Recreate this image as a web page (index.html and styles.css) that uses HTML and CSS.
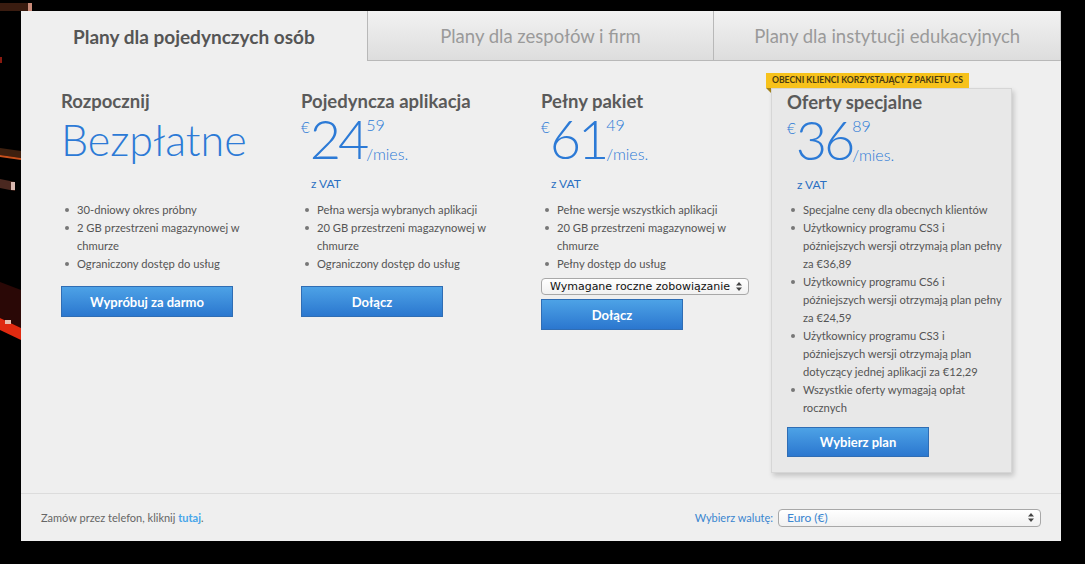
FILE: index.html
```html
<!DOCTYPE html>
<html lang="pl">
<head>
    <meta charset="UTF-8">
    <title>Plany Creative Cloud</title>
    <link rel="stylesheet" href="styles.css">
</head>
<body>
    <div class="backdrop">
        <svg width="40" height="564" viewBox="0 0 40 564">
            <rect x="0" y="3" width="28" height="8" fill="#3a1c10"/>
            <rect x="28" y="3" width="4" height="8" fill="#c88a78"/>
            <rect x="0" y="57" width="2" height="6" fill="#8a1a10"/>
            <polygon points="0,148 21,151 21,158 0,155" fill="#3e200f"/>
            <polygon points="0,155 21,158 21,160 0,157" fill="#c8501c"/>
            <polygon points="0,179 15,182 15,191 0,188" fill="#4a2820"/>
            <rect x="11" y="182" width="4" height="8" fill="#d8b8b0"/>
            <polygon points="0,282 21,290 21,328 0,318" fill="#2a0806"/>
            <polygon points="0,318 21,328 21,340 0,330" fill="#e02a10"/>
            <rect x="5" y="320" width="6" height="4" fill="#e8c0b0"/>
        </svg>
    </div>

    <div class="panel">
        <div class="tabs">
            <div class="tab active">Plany dla pojedynczych osób</div>
            <div class="tab">Plany dla zespołów i firm</div>
            <div class="tab last">Plany dla instytucji edukacyjnych</div>
        </div>

        <div class="plans">
            <div class="plan">
                <h2>Rozpocznij</h2>
                <div class="price-area free-area">
                    <div class="free">Bezpłatne</div>
                </div>
                <ul>
                    <li>30-dniowy okres próbny</li>
                    <li>2 GB przestrzeni magazynowej w chmurze</li>
                    <li>Ograniczony dostęp do usług</li>
                </ul>
                <a class="btn btn-wide" href="#">Wypróbuj za darmo</a>
            </div>

            <div class="plan">
                <h2>Pojedyncza aplikacja</h2>
                <div class="price-area">
                    <div class="price">
                        <span class="cur">€</span>
                        <span class="int">24</span>
                        <span class="side"><span class="cents">59</span><span class="per">/mies.</span></span>
                    </div>
                    <div class="vat">z VAT</div>
                </div>
                <ul>
                    <li>Pełna wersja wybranych aplikacji</li>
                    <li>20 GB przestrzeni magazynowej w chmurze</li>
                    <li>Ograniczony dostęp do usług</li>
                </ul>
                <a class="btn" href="#">Dołącz</a>
            </div>

            <div class="plan">
                <h2>Pełny pakiet</h2>
                <div class="price-area">
                    <div class="price">
                        <span class="cur">€</span>
                        <span class="int">61</span>
                        <span class="side"><span class="cents">49</span><span class="per">/mies.</span></span>
                    </div>
                    <div class="vat">z VAT</div>
                </div>
                <ul>
                    <li>Pełne wersje wszystkich aplikacji</li>
                    <li>20 GB przestrzeni magazynowej w chmurze</li>
                    <li>Pełny dostęp do usług</li>
                </ul>
                <div class="select commit">
                    <span>Wymagane roczne zobowiązanie</span>
                    <svg class="arrows" width="6" height="9" viewBox="0 0 6 9"><path d="M3 0 L6 3.5 H0 Z M0 5.5 H6 L3 9 Z" fill="#444"/></svg>
                </div>
                <a class="btn btn-tight" href="#">Dołącz</a>
            </div>

            <div class="plan special">
                <div class="badge">OBECNI KLIENCI KORZYSTAJĄCY Z PAKIETU CS</div>
                <div class="card">
                    <h2>Oferty specjalne</h2>
                    <div class="price-area">
                        <div class="price">
                            <span class="cur">€</span>
                            <span class="int">36</span>
                            <span class="side"><span class="cents">89</span><span class="per">/mies.</span></span>
                        </div>
                        <div class="vat">z VAT</div>
                    </div>
                    <ul>
                        <li>Specjalne ceny dla obecnych klientów</li>
                        <li>Użytkownicy programu CS3 i późniejszych wersji otrzymają plan pełny za €36,89</li>
                        <li>Użytkownicy programu CS6 i późniejszych wersji otrzymają plan pełny za €24,59</li>
                        <li>Użytkownicy programu CS3 i późniejszych wersji otrzymają plan dotyczący jednej aplikacji za €12,29</li>
                        <li>Wszystkie oferty wymagają opłat rocznych</li>
                    </ul>
                    <a class="btn btn-card" href="#">Wybierz plan</a>
                </div>
            </div>
        </div>

        <div class="footer">
            <p>Zamów przez telefon, kliknij <a href="#">tutaj</a>.</p>
            <div class="currency">
                <label>Wybierz walutę:</label>
                <div class="select money">
                    <span>Euro (€)</span>
                    <svg class="arrows" width="6" height="9" viewBox="0 0 6 9"><path d="M3 0 L6 3.5 H0 Z M0 5.5 H6 L3 9 Z" fill="#444"/></svg>
                </div>
            </div>
        </div>
    </div>
</body>
</html>
```

FILE: styles.css
```css
* { box-sizing: border-box; margin: 0; padding: 0; }
body {
    background: #000;
    font-family: Lato, "Open Sans", sans-serif;
    color: #555;
    position: relative;
    height: 564px;
    overflow: hidden;
}
.backdrop { position: absolute; left: 0; top: 0; }
.backdrop svg { display: block; }

.panel {
    position: relative;
    margin: 11px 0 0 21px;
    width: 1040px;
    height: 530px;
    background: #efefef;
    display: flex;
    flex-direction: column;
}

/* tabs */
.tabs { display: flex; height: 50px; }
.tab {
    flex: 1;
    display: flex;
    align-items: center;
    justify-content: center;
    font-size: 18.5px;
    color: #9a9a9a;
    background: linear-gradient(#f2f2f2, #dddddd);
    border-left: 1px solid #b8b8b8;
    border-bottom: 1px solid #b8b8b8;
}
.tab.active {
    background: #efefef;
    border: none;
    color: #555;
    font-size: 19px;
    font-weight: 700;
}
.tab.last { border-right: 1px solid #c8c8c8; }

/* plans */
.plans {
    height: 432px;
    display: grid;
    grid-template-columns: 240px 240px 225px 250px;
    padding-left: 40px;
}
.plan { padding-top: 29px; }
.plan h2 {
    font-size: 18.5px;
    line-height: 22px;
    font-weight: 700;
    color: #5a5a5a;
}
.price-area { height: 89px; }
.free-area { padding-top: 6px; }
.free {
    font-size: 43px;
    font-weight: 300;
    line-height: 43px;
    color: #2c7ad6;
}
.price {
    display: flex;
    align-items: flex-start;
    color: #2c7ad6;
    font-weight: 300;
}
.cur { font-size: 15px; line-height: 15px; margin-top: 8px; }
.int { font-size: 54px; line-height: 54px; letter-spacing: -3px; }
.side { display: flex; flex-direction: column; margin-left: 0; }
.cents { font-size: 16px; line-height: 16px; margin-top: 5px; }
.per { font-size: 16px; line-height: 16px; margin-top: 13px; }
.vat {
    font-size: 12px;
    color: #2a6fc2;
    margin: 10px 0 0 10px;
}

ul { list-style: none; width: 200px; }
li {
    font-size: 11.2px;
    line-height: 18px;
    position: relative;
    padding-left: 16px;
    color: #555;
}
li::before {
    content: "";
    position: absolute;
    left: 4px;
    top: 7px;
    width: 4px;
    height: 4px;
    border-radius: 50%;
    background: #777;
}

.btn {
    display: flex;
    align-items: center;
    justify-content: center;
    width: 142px;
    height: 31px;
    margin-top: 13px;
    background: linear-gradient(#4da2e6, #2b77cf);
    border: 1px solid #2f6db4;
    color: #fff;
    font-size: 13px;
    font-weight: 700;
    text-decoration: none;
}
.btn-wide { width: 172px; }
.btn-tight { margin-top: 4px; }
.btn-card { margin-top: 10px; height: 30px; }

.select {
    display: flex;
    align-items: center;
    justify-content: space-between;
    background: linear-gradient(#ffffff, #f1f1f1);
    border: 1px solid #a8a8a8;
    border-radius: 4px;
    padding: 0 6px 0 8px;
}
.commit {
    width: 208px;
    height: 17px;
    margin-top: 5px;
    font-family: "DejaVu Sans", sans-serif;
    font-size: 11px;
    color: #111;
}
.arrows { display: block; }

/* special offer */
.special { padding-top: 12px; }
.badge {
    position: relative;
    width: max-content;
    background: #f7c21b;
    color: #4a3a10;
    font-size: 8.6px;
    font-weight: 700;
    height: 15px;
    line-height: 15px;
    padding: 0 6px;
}
.badge::after {
    content: "";
    position: absolute;
    left: 0;
    top: 15px;
    border-top: 5px solid #a0801a;
    border-left: 5px solid transparent;
}
.card {
    margin-left: 5px;
    width: 241px;
    background: #e8e8e8;
    border: 1px solid #d6d6d6;
    box-shadow: 2px 3px 5px rgba(0, 0, 0, 0.18);
    padding: 2px 4px 15px 15px;
}
.card .price-area { height: 88px; }
.card ul { width: 220px; }

/* footer */
.footer {
    flex: 1;
    border-top: 1px solid #dcdcdc;
    display: flex;
    align-items: center;
    justify-content: space-between;
    padding: 0 20px;
    font-size: 11px;
}
.footer p { color: #666; }
.footer p a { color: #47a6ea; font-weight: 700; text-decoration: none; }
.currency { display: flex; align-items: center; gap: 5px; }
.currency label { color: #3a86d0; font-size: 11px; }
.money {
    width: 263px;
    height: 18px;
    color: #3a86d0;
    font-size: 12px;
}
```
